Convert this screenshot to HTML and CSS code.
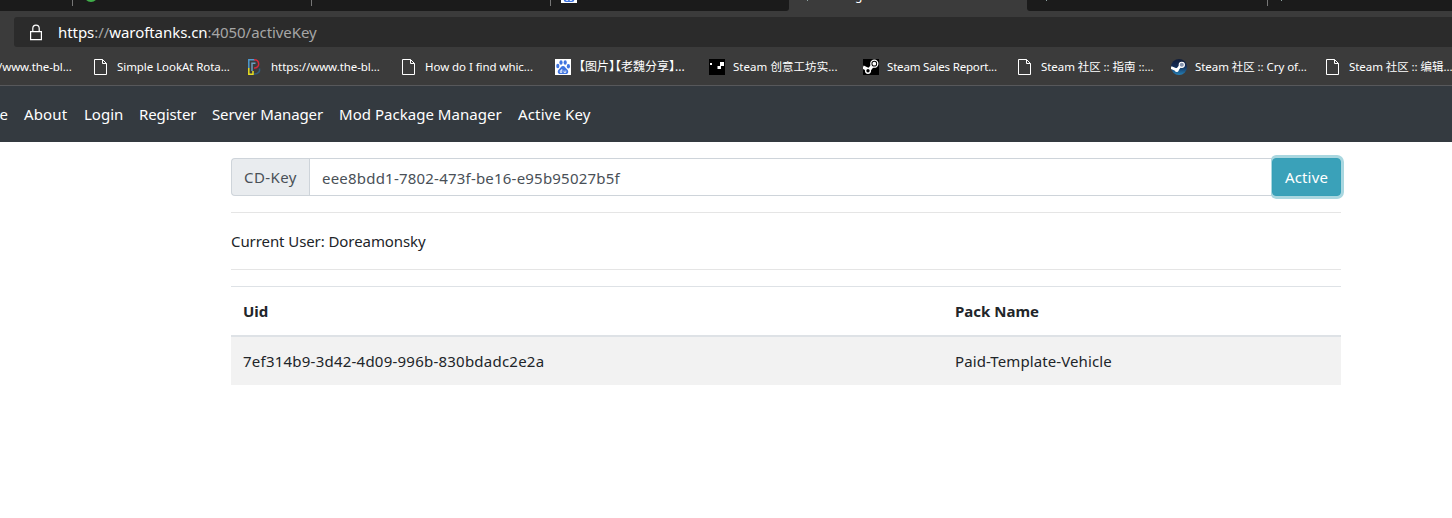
FILE: index.html
```html
<!DOCTYPE html>
<html lang="en">
<head>
<meta charset="utf-8">
<title>Active Key</title>
<link rel="stylesheet" href="styles.css">
</head>
<body>
<svg class="defs" width="0" height="0">
  <symbol id="page" viewBox="0 0 16 16"><path d="M1.500.5h8l4 4v11h-12zM9.500.5v4h4" fill="none" stroke="#fff"/></symbol>
  <symbol id="paw" viewBox="0 0 16 16"><path fill="#fff" d="M0 0h16v16H0z"/><g fill="#3f74e0"><ellipse cx="2.800" cy="7" rx="1.600" ry="2.200"/><ellipse cx="6" cy="3.500" rx="1.600" ry="2.300"/><ellipse cx="10.200" cy="3.500" rx="1.600" ry="2.300"/><ellipse cx="13.400" cy="7.200" rx="1.600" ry="2.200"/><path d="M8 7c-2 0-2.500 2-4 3.200C2 12 2.600 15 5 15h6c2.600 0 3-3 1-4.800C10.500 9 10 7 8 7z"/></g><path d="M6.800 10v3.500H5.300v-1.800h1.500M9 11.500v2h1.800v-2" fill="none" stroke="#fff" stroke-width=".8"/></symbol>
</svg>
<header class="browser">
  <div class="tabs">
    <div class="tab t1"></div>
    <div class="tab t2"><i class="dot"></i></div>
    <div class="tab t3"></div>
    <div class="tab t4"><svg width="16" height="16"><use href="#paw"/></svg></div>
    <div class="tab active"><i class="speck"></i><span>g</span></div>
    <div class="tab t6"><i class="speck"></i></div>
    <div class="tab t7"><i class="speck"></i></div>
  </div>
  <div class="address-row">
    <div class="address">
      <svg width="14" height="17" viewBox="0 0 14 17" fill="none" stroke="#fff" stroke-width="1.200"><path d="M1.600 7.600h10.800v8H1.600zM3.800 7.500V4.300a3.200 3.200 0 0 1 6.400 0v3.200"/></svg>
      <span class="url"><b>https</b>://<b>waroftanks.cn</b>:4050/activeKey</span>
    </div>
  </div>
  <div class="bookmarks">
    <a class="bm"><svg><use href="#page"/></svg><span>https://www.the-bl...</span></a>
    <a class="bm"><svg><use href="#page"/></svg><span>Simple LookAt Rota...</span></a>
    <a class="bm"><svg viewBox="0 0 16 16" fill="none" stroke-width="1.500"><path d="M1.800 9V.8H8" stroke="#4d9bd0"/><path d="M7 .8c6 0 6.500 8.200 0 8.200" stroke="#d52a3c"/><path d="M5 12V4.200h3.500" stroke="#6a9fc0"/><path d="M1.800 9v6.200H6V12" stroke="#e8df22"/><path d="M7 15c5 0 6-3 5.500-5.500" stroke="#315d80"/></svg><span>https://www.the-bl...</span></a>
    <a class="bm"><svg><use href="#page"/></svg><span>How do I find whic...</span></a>
    <a class="bm"><svg><use href="#paw"/></svg><span class="cn">【图片】【老魏分享】...</span></a>
    <a class="bm"><svg viewBox="0 0 16 16"><path d="M0 0h16v16H0z"/><path d="M1 4h2v2H1zM11 3h4v4h-4zM8.500 7H12v3H8.500z" fill="#fff"/></svg><span class="wide">Steam 创意工坊实...</span></a>
    <a class="bm"><svg viewBox="0 0 16 16"><path d="M0 0h16v16H0z"/><path d="M0 8l6 3 4-5" stroke="#fff" stroke-width="3.500" fill="none"/><circle cx="11.300" cy="4.700" r="3.500" fill="#000" stroke="#fff" stroke-width="1.300"/><circle cx="11.300" cy="4.700" r="1.900" fill="#fff"/><circle cx="5" cy="11.800" r="2.400" fill="#000" stroke="#fff" stroke-width="1.400"/></svg><span class="tight">Steam Sales Report...</span></a>
    <a class="bm"><svg><use href="#page"/></svg><span>Steam 社区 :: 指南 ::...</span></a>
    <a class="bm"><svg viewBox="0 0 16 16"><defs><linearGradient id="sg" x2="0" y2="1"><stop stop-color="#111d38"/><stop offset=".45" stop-color="#142c55"/><stop offset="1" stop-color="#2581b8"/></linearGradient></defs><circle cx="8" cy="8" r="8" fill="url(#sg)"/><path d="M0 8.500l6 2.500 4-5" stroke="#fff" stroke-width="2.800" fill="none"/><circle cx="10.800" cy="5.800" r="2.600" fill="#8593ad" stroke="#fff" stroke-width="1.100"/><circle cx="5.700" cy="11" r="2" fill="#fff"/></svg><span>Steam 社区 :: Cry of...</span></a>
    <a class="bm"><svg><use href="#page"/></svg><span>Steam 社区 :: 编辑...</span></a>
  </div>
</header>
<nav class="navbar">
  <a class="n0">Home</a><a class="n1">About</a><a class="n2">Login</a><a class="n3">Register</a><a class="n4">Server Manager</a><a class="n5">Mod Package Manager</a><a class="n6">Active Key</a>
</nav>
<main class="container">
  <div class="input-group">
    <label class="prepend" for="key"><span>CD-Key</span></label>
    <input id="key" class="field" type="text" value="eee8bdd1-7802-473f-be16-e95b95027b5f">
    <button class="btn">Active</button>
  </div>
  <div class="user"><span>Current User: Doreamonsky</span></div>
  <div class="table">
    <div class="row head"><div><span>Uid</span></div><div><span>Pack Name</span></div></div>
    <div class="row"><div><span class="uid">7ef314b9-3d42-4d09-996b-830bdadc2e2a</span></div><div><span class="pack">Paid-Template-Vehicle</span></div></div>
  </div>
</main>
</body>
</html>
```
FILE: styles.css
```css
* { box-sizing: border-box; }
body { margin: 0; background: #fff; color: #212529; font: 15px/24px "Noto Sans", "Noto Sans CJK SC", sans-serif; overflow: hidden; }
.defs { display: block; }
.browser { background: #3b3b3b; border-bottom: 1px solid #57585b; height: 86px; overflow: hidden; }
.tabs { display: flex; height: 11px; background: #3b3b3b; overflow: hidden; }
.tab { flex: none; height: 11px; background: linear-gradient(#777, #777) right top / 1px 6px no-repeat #1b1b1b; overflow: hidden; display: flex; }
.t1 { width: 73px; }
.t2, .t3 { width: 239px; }
.t4 { width: 238px; background: #1b1b1b; border-bottom-right-radius: 3px; padding-left: 10px; }
.t4 svg { margin-top: -13px; flex: none; }
.active { width: 238px; background: #3b3b3b; padding-left: 18px; }
.active span { color: #fff; font-size: 12px; line-height: 12px; margin: -10px 0 0 47px; }
.t6 { width: 241px; border-bottom-left-radius: 3px; padding-left: 19px; }
.t7 { width: 184px; background: #1b1b1b; padding-left: 13px; }
.dot { width: 14px; height: 14px; border-radius: 7px; background: #3fae49; margin: -12px 0 0 11px; }
.speck { width: 1px; height: 1px; background: #8ca09f; }
.address-row { height: 36px; padding: 6px 0 0 14px; }
.address { height: 30px; background: #2b2b2b; border-radius: 3px 0 0 3px; display: flex; align-items: center; padding-left: 15px; }
.url { margin-left: 15px; color: #a6a6a6; font-size: 15px; letter-spacing: -.06px; white-space: nowrap; }
.url b { font-weight: 400; color: #fff; }
.bookmarks { display: flex; height: 38px; margin-left: -61px; align-items: center; padding-top: 2px; }
.bm { flex: none; width: 154px; display: flex; align-items: center; gap: 8px; color: #fff; font-size: 11.500px; line-height: 18px; letter-spacing: -.06px; white-space: nowrap; }
.bm svg { width: 16px; height: 16px; flex: none; }
.bm:last-child { width: 130px; }
.cn { font-size: 12px; letter-spacing: 0; font-feature-settings: "halt"; }
.wide { letter-spacing: .05px; }
.tight { letter-spacing: -.18px; }
.navbar { height: 56px; background: #343a40; color: #fff; display: flex; align-items: center; gap: 16px; white-space: nowrap; }
.n0 { margin-left: -36px; width: 44px; text-align: right; }
.n1 { width: 44px; letter-spacing: .15px; }
.n2 { width: 39px; }
.n3 { width: 57px; letter-spacing: -.1px; }
.n4 { width: 111px; letter-spacing: -.12px; }
.n5 { width: 163px; letter-spacing: .03px; }
.n6 { letter-spacing: .15px; }
.container { width: 1110px; margin: 16px 0 0 231px; }
.input-group { display: flex; height: 38px; }
.prepend { width: 78px; background: #e9ecef; border: 1px solid #ced4da; border-right: 0; border-radius: 4px 0 0 4px; padding: 6px 12px; color: #495057; letter-spacing: .4px; white-space: nowrap; }
.field { flex: 1; min-width: 0; border: 1px solid #ced4da; padding: 7px 12px 5px; color: #495057; font: inherit; letter-spacing: .21px; outline: 0; }
.btn { width: 69px; padding: 0; background: #3aa1b9; border: 1px solid #36a0b7; border-radius: 4px; color: #fff; font: inherit; letter-spacing: .15px; box-shadow: 0 0 0 3px #a9d7e0; clip-path: inset(-3px -3px -3px -1px round 5px); }
.user { margin: 16px 0; height: 58px; padding-top: 16px; border-top: 1px solid #e5e5e5; border-bottom: 1px solid #e5e5e5; letter-spacing: -.08px; }
.row { display: grid; grid-template-columns: 712px 1fr; height: 48px; padding: 12px 0; background: #f2f2f2; }
.row > div { padding-left: 12px; }
.uid { letter-spacing: .23px; }
.pack { letter-spacing: .1px; }
.head { height: 51px; background: #fff; border-top: 1px solid #dee2e6; border-bottom: 2px solid #dee2e6; font-weight: 700; }
```
